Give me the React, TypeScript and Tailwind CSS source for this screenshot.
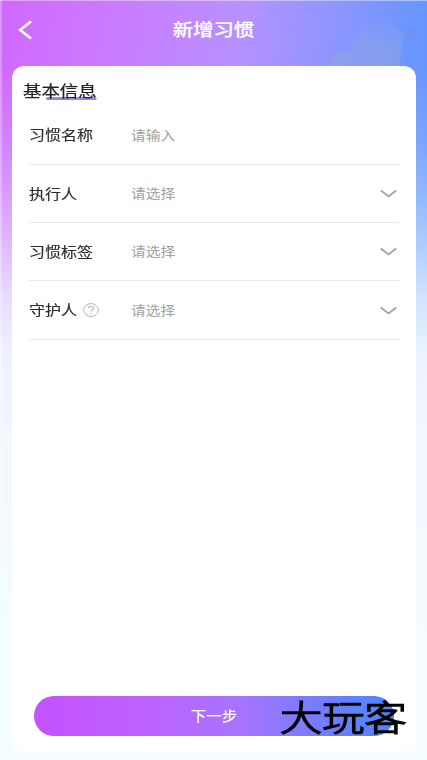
import { useState } from "react";

interface Field {
    id: string;
    label: string;
    placeholder: string;
    type: "input" | "select";
    help?: boolean;
}

const fields: Field[] = [
    { id: "name", label: "习惯名称", placeholder: "请输入", type: "input" },
    { id: "executor", label: "执行人", placeholder: "请选择", type: "select" },
    { id: "tag", label: "习惯标签", placeholder: "请选择", type: "select" },
    { id: "guardian", label: "守护人", placeholder: "请选择", type: "select", help: true },
];

function Cloud() {
    return (
        <svg className="h-[80px] w-[110px]" viewBox="0 0 110 80" fill="none">
            <defs>
                <linearGradient id="cloud" x1="0" y1="0" x2="0" y2="1">
                    <stop offset="0" stopColor="#8fa6e6" stopOpacity="0.1" />
                    <stop offset="0.5" stopColor="#92a6dc" stopOpacity="0.5" />
                    <stop offset="1" stopColor="#92a6dc" stopOpacity="0.5" />
                </linearGradient>
            </defs>
            <path
                d="M14 80V60c0-5 5-8 18-8 3-3 2-7 4-13 3-9 9-15 19-16 4-4 13-5 17 0 7 0 9 4 12 8 3 3 3 9 1 14-2 12-1 20-4 35Z"
                fill="url(#cloud)"
            />
            <ellipse cx="94" cy="34" rx="7" ry="6" fill="#8588d4" fillOpacity="0.35" />
        </svg>
    );
}

function HelpIcon() {
    return (
        <svg className="ml-[6px] h-[14px] w-4" viewBox="0 0 16 14" fill="none" stroke="#b5b5b5">
            <ellipse cx="8" cy="7" rx="7.4" ry="6.4" strokeWidth="1" />
            <path d="M5.4 5.3c0-1.3 1.1-2 2.6-2s2.6.7 2.6 1.9c0 1.5-2.6 1.6-2.6 3.4M8 9.8v1.2" strokeWidth="1.1" />
        </svg>
    );
}

function ChevronIcon() {
    return (
        <svg className="ml-auto mr-[2px] h-[9px] w-[17px]" viewBox="0 0 17 9" fill="none">
            <path d="M.8 1.5 8.5 7.4 16.2 1.5" stroke="#a3a3a3" strokeWidth="1.9" />
        </svg>
    );
}

export default function App() {
    const [active, setActive] = useState<string | null>(null);

    return (
        <div className="relative isolate flex h-[760px] w-[427px] flex-col overflow-hidden bg-[linear-gradient(to_bottom,#eff5fe_0%,#f0f7fe_55%,#f4feff_85%,#f5ffff_100%)] font-['Noto_Sans_CJK_SC',sans-serif]">
            {/* Fundo em degradê */}
            <div className="absolute inset-x-0 top-0 -z-10 h-[430px] bg-[linear-gradient(98deg,#d068ff_0%,#cb78ff_20%,#c188ff_40%,#b592ff_51%,#9195ff_68%,#7196ff_82%,#5598ff_100%)] [mask-image:linear-gradient(to_bottom,#000_0,#000_70px,rgba(0,0,0,0.85)_140px,rgba(0,0,0,0.64)_200px,rgba(0,0,0,0.42)_250px,rgba(0,0,0,0.19)_300px,rgba(0,0,0,0.03)_355px,transparent_430px)]" />
            <div className="absolute inset-y-0 left-0 -z-10 w-[2px] bg-white/30" />
            <div className="absolute inset-x-0 top-0 -z-10 h-px bg-white/40" />
            <div className="absolute right-0 top-0 -z-10">
                <Cloud />
            </div>

            <header className="grid h-[66px] grid-cols-[60px_1fr_60px] items-center pb-[7px]">
                <button className="pl-[18px]">
                    <svg className="h-5 w-[14px]" viewBox="0 0 14 20" fill="none">
                        <path d="M13 1.5 2 10l11 8.5" stroke="white" strokeWidth="2.6" />
                    </svg>
                </button>
                <h1 className="-translate-y-px scale-x-[1.18] text-center text-[17.3px] font-medium leading-none text-white [-webkit-text-stroke:0.2px_#fff]">
                    新增习惯
                </h1>
            </header>

            <main className="ml-3 mr-[11px] flex h-[685px] flex-col rounded-xl bg-white px-[17px]">
                <div className="-ml-[6px] flex h-[40.6px] pt-[15px]">
                    <h2 className="relative isolate h-[18px] origin-left scale-x-[1.15] text-[16px] leading-[18px] text-[#222] [-webkit-text-stroke:0.2px_#222]">
                        基本信息
                        <span className="absolute bottom-0 left-[20px] right-0 -z-10 h-[3px] translate-y-px rounded-full bg-[#9d80f0]" />
                    </h2>
                </div>

                {fields.map((field) => (
                    <div
                        key={field.id}
                        onClick={() => setActive(field.id)}
                        data-active={active === field.id}
                        className="flex h-[58.3px] shrink-0 items-center border-b border-[#e8e8e8]"
                    >
                        <div className="flex w-[102px] items-center">
                            <span
                                className={
                                    field.label.length === 4
                                        ? "w-16 origin-left scale-x-[1.15] whitespace-nowrap text-[13.9px] leading-none text-[#2b2b2b] [-webkit-text-stroke:0.15px_#2b2b2b]"
                                        : "w-12 origin-left scale-x-[1.15] whitespace-nowrap text-[13.9px] leading-none text-[#2b2b2b] [-webkit-text-stroke:0.15px_#2b2b2b]"
                                }
                            >
                                {field.label}
                            </span>
                            {field.help && <HelpIcon />}
                        </div>
                        <span className="origin-left -translate-y-[0.5px] scale-x-[1.15] text-[12.8px] leading-none text-[#a0a0a0]">
                            {field.placeholder}
                        </span>
                        {field.type === "select" && <ChevronIcon />}
                    </div>
                ))}

                <button className="relative mx-[5px] mb-[15px] mt-auto h-10 rounded-full bg-[linear-gradient(90deg,#c451ff_0%,#bd61ff_30%,#a774ff_58%,#737cff_80%,#4a86ff_100%)] text-white">
                    <span className="block scale-x-[1.17] text-[13.3px] font-medium leading-none">下一步</span>
                    {/* Marca d'água sobre o botão */}
                    <span className="absolute left-[246px] top-0 origin-left scale-x-[1.19] whitespace-nowrap text-[35.5px] font-light leading-[40px] text-black [-webkit-text-stroke:1.3px_#000] [stroke-linejoin:round]">
                        大玩客
                    </span>
                </button>
            </main>
        </div>
    );
}
